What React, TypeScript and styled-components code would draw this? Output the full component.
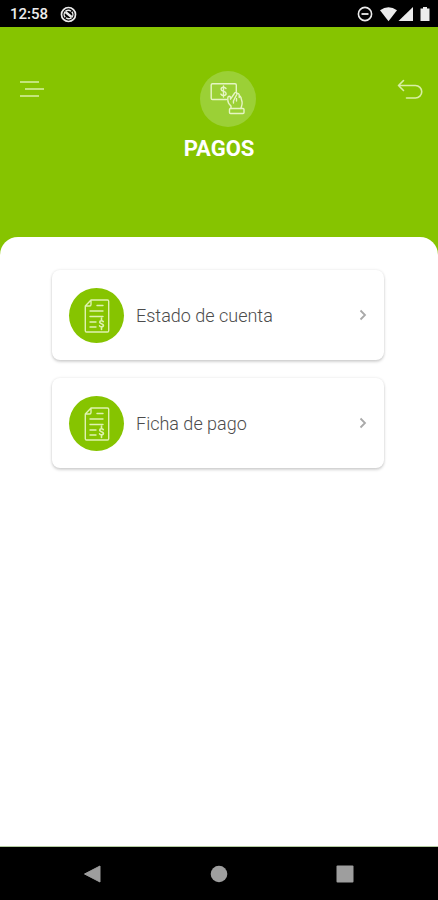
import React from "react";
import styled, { createGlobalStyle } from "styled-components";

const green = "#86c400";

const GlobalStyle = createGlobalStyle`
  * { box-sizing: border-box; }
  body { margin: 0; background: #fff; font-family: Roboto, "Noto Sans", sans-serif; }
  svg { display: block; }
`;

const Screen = styled.div`
  min-height: 100vh;
  display: flex;
  flex-direction: column;
  background: ${green};
`;

const StatusBar = styled.div`
  height: 27px;
  padding: 1px 8px 0 10px;
  display: flex;
  align-items: center;
  justify-content: space-between;
  background: #000;
  color: #ececec;
`;

const StatusGroup = styled.div<{ $gap: number }>`
  display: flex;
  align-items: center;
  gap: ${(p) => p.$gap}px;
`;

const Clock = styled.time`
  font-size: 15px;
  line-height: 20px;
  font-weight: 500;
`;

const Header = styled.header`
  height: 210px;
  padding: 44px 14px 0 18px;
  display: grid;
  grid-template-columns: 28px 1fr 28px;
  align-items: start;
`;

const IconButton = styled.button`
  width: 28px;
  height: 36px;
  padding: 0;
  border: 0;
  display: grid;
  place-items: center;
  background: transparent;
  color: #d9efa4;
  cursor: pointer;
`;

const TitleBlock = styled.div`
  display: flex;
  flex-direction: column;
  align-items: center;
  gap: 9px;
`;

const TitleIcon = styled.div`
  width: 56px;
  height: 56px;
  margin-left: 14px;
  border-radius: 50%;
  background: #9bd036;
  color: #e6f5c4;
`;

const Title = styled.h1`
  margin: 0 4px 0 0;
  font-size: 22px;
  line-height: 26px;
  font-weight: 700;
  color: #fff;
`;

const Sheet = styled.main`
  flex: 1;
  padding: 33px 54px 32px 52px;
  border-radius: 18px 18px 0 0;
  border-bottom: 1px solid #b4cca0;
  background: #fff;
`;

const CardList = styled.nav`
  display: flex;
  flex-direction: column;
  gap: 18px;
`;

const Card = styled.button`
  width: 100%;
  height: 90px;
  padding: 0 16px 0 17px;
  border: 0;
  border-radius: 8px;
  display: flex;
  align-items: center;
  gap: 12px;
  background: #fff;
  box-shadow: 0 2px 3px rgba(0, 0, 0, 0.16), 0 0 3px rgba(0, 0, 0, 0.1);
  color: #4c4c4c;
  font-family: inherit;
  text-align: left;
  cursor: pointer;
`;

const CardIcon = styled.span`
  width: 55px;
  height: 55px;
  flex: none;
  border-radius: 50%;
  background: ${green};
  color: #dff2b0;
`;

const CardLabel = styled.span`
  flex: 1;
  padding-top: 2px;
  font-size: 18px;
  line-height: 24px;
  font-weight: 300;
`;

const NavBar = styled.nav`
  height: 53px;
  padding: 0 30px;
  display: grid;
  grid-template-columns: repeat(3, 1fr);
  background: #000;
`;

const NavButton = styled.button`
  padding: 0;
  border: 0;
  display: grid;
  place-items: center;
  background: transparent;
  color: #9e9e9e;
  cursor: pointer;
`;

const SyncIcon = () => (
  <svg width="17" height="17" viewBox="0 0 17 17" fill="none" stroke="currentColor" aria-hidden="true">
    <circle cx="8.500" cy="8.500" r="7" strokeWidth="1.700" />
    <path d="M5.200 11.300a4.200 4.200 0 0 1 .2-5.800M5.500 5.200q3-2 5.500 0M11.800 5.700a4.200 4.200 0 0 1-.2 5.800M11.500 11.800q-3 2-5.500 0" strokeWidth="1.400" />
    <path d="M5.500 6l6 5" strokeWidth="2.400" />
  </svg>
);

const DoNotDisturbIcon = () => (
  <svg width="16" height="16" viewBox="0 0 16 16" fill="none" stroke="currentColor" aria-hidden="true">
    <circle cx="8" cy="8" r="6.600" strokeWidth="1.600" />
    <path d="M4.500 8h7" strokeWidth="1.800" />
  </svg>
);

const SignalIcons = () => (
  <svg width="50" height="16" viewBox="0 0 50 16" fill="currentColor" aria-hidden="true">
    <path d="M0 4.300Q8.500-2 17 4.300L8.500 15.200z" />
    <path d="M33 1v14H18.500z" />
    <path d="M43 1h4v1.600h2.500V15H40.500V2.600H43z" />
  </svg>
);

const MenuIcon = () => (
  <svg width="28" height="20" viewBox="0 0 28 20" stroke="currentColor" strokeWidth="1.500" aria-hidden="true">
    <path d="M2 3h19M7 10h19M2 17h19" />
  </svg>
);

const ReturnIcon = () => (
  <svg width="28" height="24" viewBox="0 0 28 24" fill="none" stroke="currentColor" strokeWidth="1.600" strokeLinecap="round" strokeLinejoin="round" aria-hidden="true">
    <path d="M7.500 3.500L2.500 8.500l5 5M2.500 8.500H19.500a6 6 0 0 1 0 12.500h-9" />
  </svg>
);

const PaymentIcon = () => (
  <svg width="56" height="56" viewBox="0 0 56 56" fill="none" stroke="currentColor" strokeWidth="1.400" strokeLinecap="round" strokeLinejoin="round" aria-hidden="true">
    <path d="M26.500 28.500H12.500q-1.300 0-1.300-1.300V14q0-1.300 1.300-1.300H35q1.300 0 1.300 1.300v6.500" />
    <path d="M26 17.500c-.7-1-1.400-1.200-2.500-1.200-1.400 0-2.400.8-2.400 2 0 3 5 1.300 5 4.200 0 1.300-1 2.100-2.500 2.100-1.300 0-2.100-.5-2.700-1.500M23.500 15v11" />
    <path d="M31 37.500v-2.500c-1.800-1.500-3.200-3.500-3.200-6v-2.200q.2-1.500 1.500-1.600 1.200 0 1.200 1.500v1.500l4.200-6.200c1-1.300 2.800-.3 2.200 1.200l-2.400 4.600q-1.500 2-1 4.200" />
    <path d="M37 22.500q1.700-.5 2.200 1.200v2.800M39.200 25q1.500 0 1.700 1.500l1.200 4.500c.5 2.500-.5 4.200-1.300 6.500M36.500 27.500v2.500" />
    <rect x="29.500" y="37.500" width="14.500" height="5" rx="1" />
  </svg>
);

const DocumentIcon = () => (
  <svg width="55" height="55" viewBox="0 0 55 55" fill="none" stroke="currentColor" strokeWidth="1.400" strokeLinecap="round" strokeLinejoin="round" aria-hidden="true">
    <path d="M22 12H38.500q1.200 0 1.200 1.200v29.600q0 1.200-1.200 1.200h-21q-1.200 0-1.200-1.200V18zM22 12v4.500q0 1.500-1.500 1.500h-4.200" />
    <path d="M28 17.500h6M21 23h13M21 28.500h13M21 34h6M21 39h6" />
    <path d="M34.300 33.700q-.6-.9-1.800-.9c-1.100 0-1.800.6-1.800 1.400 0 1.800 3.700 1.200 3.700 3.100 0 1-.8 1.500-1.900 1.500q-1.300 0-1.900-1M32.500 30v2.500M32.500 39v2.500" strokeWidth="1.600" />
  </svg>
);

const ChevronIcon = () => (
  <svg width="10" height="14" viewBox="0 0 10 14" fill="none" stroke="#a9a9a9" strokeWidth="1.800" aria-hidden="true">
    <path d="M2.500 2.500L7 7l-4.500 4.500" />
  </svg>
);

const options = ["Estado de cuenta", "Ficha de pago"];

export default function App() {
  return (
    <Screen>
      <GlobalStyle />
      <StatusBar>
        <StatusGroup $gap={12}>
          <Clock>12:58</Clock>
          <SyncIcon />
        </StatusGroup>
        <StatusGroup $gap={7}>
          <DoNotDisturbIcon />
          <SignalIcons />
        </StatusGroup>
      </StatusBar>
      <Header>
        <IconButton aria-label="Menú"><MenuIcon /></IconButton>
        <TitleBlock>
          <TitleIcon><PaymentIcon /></TitleIcon>
          <Title>PAGOS</Title>
        </TitleBlock>
        <IconButton aria-label="Regresar"><ReturnIcon /></IconButton>
      </Header>
      <Sheet>
        <CardList aria-label="Pagos">
          {options.map((label) => (
            <Card key={label}>
              <CardIcon><DocumentIcon /></CardIcon>
              <CardLabel>{label}</CardLabel>
              <ChevronIcon />
            </Card>
          ))}
        </CardList>
      </Sheet>
      <NavBar aria-label="Sistema">
        <NavButton aria-label="Atrás">
          <svg width="18" height="18" viewBox="0 0 18 18" fill="currentColor"><path d="M16 1v16L0.500 9z" stroke="currentColor" strokeLinejoin="round" /></svg>
        </NavButton>
        <NavButton aria-label="Inicio">
          <svg width="18" height="18" viewBox="0 0 18 18" fill="currentColor"><circle cx="9" cy="9" r="8.300" /></svg>
        </NavButton>
        <NavButton aria-label="Recientes">
          <svg width="18" height="18" viewBox="0 0 18 18" fill="currentColor"><rect x="0.500" y="0.500" width="17" height="17" rx="1" /></svg>
        </NavButton>
      </NavBar>
    </Screen>
  );
}
